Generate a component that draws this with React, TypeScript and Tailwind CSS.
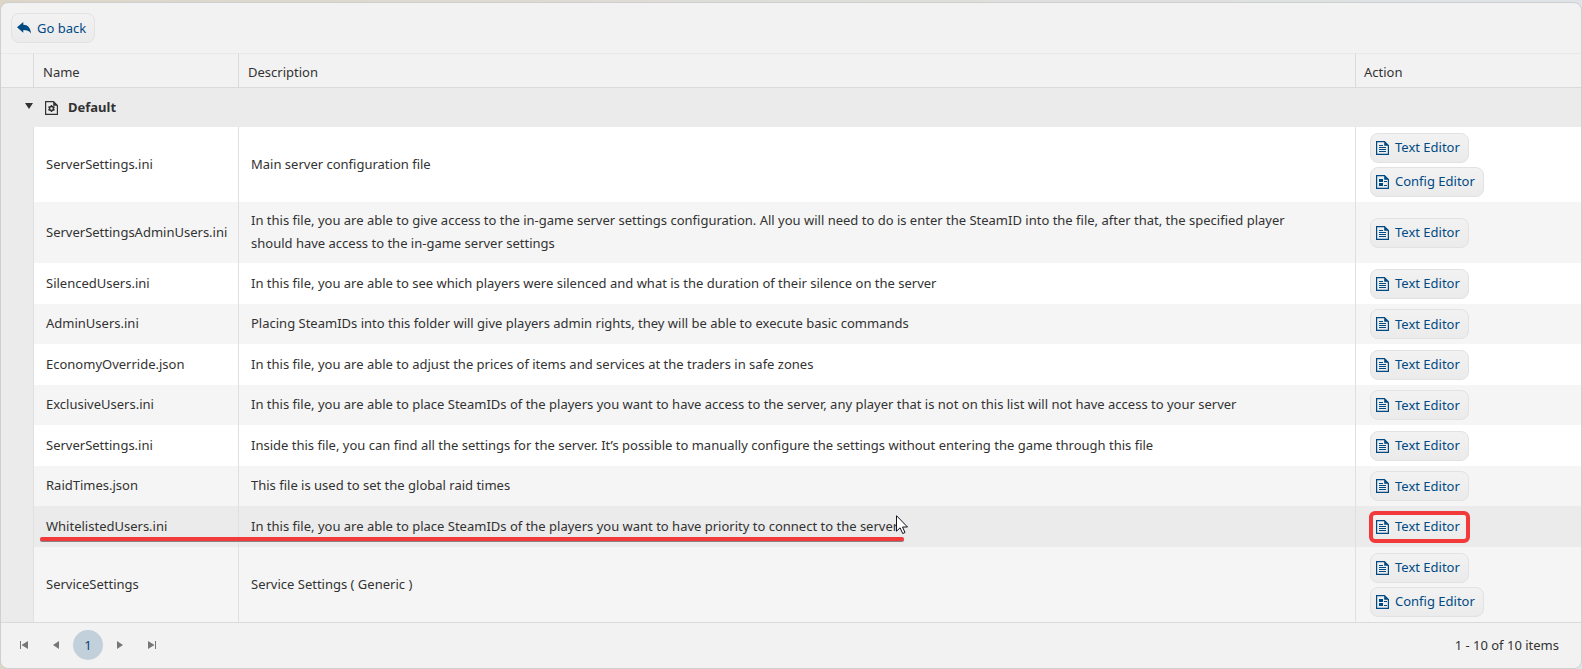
import React from 'react';

type EditorKind = 'text' | 'config';

interface ConfigFile {
  id: number;
  name: string;
  description: string;
  editors: EditorKind[];
  highlighted?: boolean;
}

const files: ConfigFile[] = [
  { id: 1, name: 'ServerSettings.ini', description: 'Main server configuration file', editors: ['text', 'config'] },
  {
    id: 2,
    name: 'ServerSettingsAdminUsers.ini',
    description:
      'In this file, you are able to give access to the in-game server settings configuration. All you will need to do is enter the SteamID into the file, after that, the specified player should have access to the in-game server settings',
    editors: ['text'],
  },
  { id: 3, name: 'SilencedUsers.ini', description: 'In this file, you are able to see which players were silenced and what is the duration of their silence on the server', editors: ['text'] },
  { id: 4, name: 'AdminUsers.ini', description: 'Placing SteamIDs into this folder will give players admin rights, they will be able to execute basic commands', editors: ['text'] },
  { id: 5, name: 'EconomyOverride.json', description: 'In this file, you are able to adjust the prices of items and services at the traders in safe zones', editors: ['text'] },
  { id: 6, name: 'ExclusiveUsers.ini', description: 'In this file, you are able to place SteamIDs of the players you want to have access to the server, any player that is not on this list will not have access to your server', editors: ['text'] },
  { id: 7, name: 'ServerSettings.ini', description: 'Inside this file, you can find all the settings for the server. It’s possible to manually configure the settings without entering the game through this file', editors: ['text'] },
  { id: 8, name: 'RaidTimes.json', description: 'This file is used to set the global raid times', editors: ['text'] },
  { id: 9, name: 'WhitelistedUsers.ini', description: 'In this file, you are able to place SteamIDs of the players you want to have priority to connect to the server', editors: ['text'], highlighted: true },
  { id: 10, name: 'ServiceSettings', description: 'Service Settings ( Generic )', editors: ['text', 'config'] },
];

const editorLabels: Record<EditorKind, string> = {
  text: 'Text Editor',
  config: 'Config Editor',
};

const ReplyIcon = () => (
  <svg className="h-[12px] w-[14px]" viewBox="0 0 14 12" fill="currentColor" aria-hidden="true">
    <path d="M0 5.300 6.300 0v2.800c4.600 0.100 7.200 3 7.700 8.700C12 8.700 10 7.900 6.300 7.900v2.900Z" />
  </svg>
);

const PageOutline = () => (
  <>
    <path d="M0.600 0.600h7.900l3.900 3.900v8.900H0.600z" fill="none" stroke="currentColor" strokeWidth="1.200" />
    <path d="M8.200 0.500 12.500 4.800H8.200z" fill="currentColor" />
  </>
);

const TextFileIcon = () => (
  <svg className="h-[14px] w-[13px]" viewBox="0 0 13 14" aria-hidden="true">
    <PageOutline />
    <path d="M3 4.500h4M3 6.500h7M3 8.500h7M3 10.500h7" stroke="currentColor" strokeWidth="1" />
  </svg>
);

const ConfigFileIcon = () => (
  <svg className="h-[14px] w-[13px]" viewBox="0 0 13 14" aria-hidden="true">
    <PageOutline />
    <path d="M3 4h4v3H3zM3 8h4v3H3z" fill="currentColor" />
    <path d="M8 6.500h3M8 10.500h3" stroke="currentColor" strokeWidth="1" />
  </svg>
);

const GearFileIcon = () => (
  <svg className="h-[14px] w-[13px]" viewBox="0 0 13 14" aria-hidden="true">
    <PageOutline />
    <circle cx="6.500" cy="7.500" r="2" fill="none" stroke="currentColor" strokeWidth="1.500" />
    <path d="M6.500 4v1.500M6.500 9.500v1.500M3.500 5.750l1.300 0.750M8.200 8.500l1.300 0.750M9.500 5.750l-1.300 0.750M4.800 8.500l-1.300 0.750" stroke="currentColor" strokeWidth="1.500" />
  </svg>
);

const PointerIcon = () => (
  <svg className="absolute top-[9px] left-[657px] h-[20px] w-[13px]" viewBox="0 0 13 20" aria-hidden="true">
    <path d="M0.500 0.700v15.500l3.600-3.400 2.600 5.700 2.300-1-2.500-5.500h5z" fill="#fff" stroke="#14141f" strokeWidth="1" />
  </svg>
);

const buttonStyles =
  'flex h-[30px] items-center gap-[6px] rounded-lg border border-[#e2e2e2] bg-linear-to-b from-[#f2f2f2] to-[#ebebeb] pr-[8px] pl-[5px] text-[#004a84] hover:to-[#e2e2e2]';

const EditorButton: React.FC<{ kind: EditorKind }> = ({ kind }) => (
  <button type="button" className={buttonStyles}>
    {kind === 'text' ? <TextFileIcon /> : <ConfigFileIcon />}
    {editorLabels[kind]}
  </button>
);

const pagerButton = 'flex h-[30px] w-[30px] items-center justify-center rounded-full text-[#777] hover:bg-[#e4e4e4]';

const Pager = () => (
  <footer className="flex items-center justify-between border-t border-[#dadada] pt-[7px] pr-[22px] pb-[8px] pl-[8px]">
    <nav className="flex items-center gap-[2px]" aria-label="Pages">
      <button type="button" className={pagerButton} aria-label="First page">
        <svg className="h-2 w-2" viewBox="0 0 8 8" fill="currentColor"><path d="M0 0h1v8H0zM8 0v8L1.500 4z" /></svg>
      </button>
      <button type="button" className={pagerButton} aria-label="Previous page">
        <svg className="h-2 w-2" viewBox="0 0 8 8" fill="currentColor"><path d="M7 0v8L1 4z" /></svg>
      </button>
      <button type="button" className="h-[30px] w-[30px] rounded-full bg-[#c2d0dc] text-[#0d3f75]" aria-current="page">1</button>
      <button type="button" className={pagerButton} aria-label="Next page">
        <svg className="h-2 w-2" viewBox="0 0 8 8" fill="currentColor"><path d="M1 0v8l6-4z" /></svg>
      </button>
      <button type="button" className={pagerButton} aria-label="Last page">
        <svg className="h-2 w-2" viewBox="0 0 8 8" fill="currentColor"><path d="M7 0h1v8H7zM0 0v8l6.500-4z" /></svg>
      </button>
    </nav>
    <span>1 - 10 of 10 items</span>
  </footer>
);

const headerCell = 'border-y border-l border-t-[#e8e8e8] border-b-[#dadada] border-l-[#dadada] pt-[4px] font-normal';
const bodyCell = 'relative border-l border-[#e0e0e0] pt-[7px] pb-[8px] pl-[12px]';

const App: React.FC = () => {
  return (
    <main className="min-h-screen bg-linear-to-r from-[#ddd6c8] to-[#dfe4e8] pt-[2px] font-['Noto_Sans','Segoe_UI',sans-serif] text-[13px] leading-[23px] text-[#323232]">
      <section className="overflow-hidden rounded-lg border border-[#cfcfcf] bg-[#f2f2f2]">
        <div className="p-[10px]">
          <button type="button" className={buttonStyles}>
            <ReplyIcon />
            Go back
          </button>
        </div>
        <table className="w-full table-fixed border-separate border-spacing-0">
          <colgroup>
            <col className="w-[32px]" />
            <col className="w-[205px]" />
            <col />
            <col className="w-[226px]" />
          </colgroup>
          <thead>
            <tr className="h-[35px] text-left">
              <td className="border-y border-t-[#e8e8e8] border-b-[#dadada]" />
              <th scope="col" className={`${headerCell} pl-[9px]`}>Name</th>
              <th scope="col" className={`${headerCell} pl-[9px]`}>Description</th>
              <th scope="col" className={`${headerCell} pl-[8px]`}>Action</th>
            </tr>
          </thead>
          <tbody>
            <tr className="h-[39px] bg-[#ebebeb]">
              <td colSpan={4}>
                <div className="flex items-center pl-[24px]">
                  <button type="button" className="pb-[4px]" aria-label="Collapse group" aria-expanded="true">
                    <svg className="h-[6px] w-2" viewBox="0 0 8 6" fill="currentColor"><path d="M0 0h8L4 6z" /></svg>
                  </button>
                  <span className="flex items-center gap-[10px] pl-[12px] font-bold">
                    <GearFileIcon />
                    Default
                  </span>
                </div>
              </td>
            </tr>
            {files.map((file) => (
              <tr
                key={file.id}
                className={`${file.editors.length > 1 ? 'h-[75px]' : 'h-[40px] even:h-[41px]'} ${file.highlighted ? 'bg-[#ebebeb]' : 'bg-white odd:bg-[#f5f5f5]'}`}
              >
                <td className="bg-[#ebebeb]" />
                <td className={bodyCell}>
                  {file.name}
                  {file.highlighted && (
                    <span className="absolute bottom-[6px] left-[6px] z-10 h-[4px] w-[864px] rounded-full bg-[#f23a3a] shadow-[0_1px_0_#8a8080]" />
                  )}
                </td>
                <td className={`${bodyCell} pr-[32px]`}>
                  {file.description}
                  {file.highlighted && <PointerIcon />}
                </td>
                <td className="border-l border-[#e0e0e0] pl-[14px]">
                  <div className="flex flex-col items-start gap-[4px] py-[5px]">
                    {file.editors.map((kind) => (
                      <div key={kind} className="relative">
                        <EditorButton kind={kind} />
                        {file.highlighted && (
                          <span className="pointer-events-none absolute -inset-px rounded-md border-4 border-[#f23a3a]" />
                        )}
                      </div>
                    ))}
                  </div>
                </td>
              </tr>
            ))}
          </tbody>
        </table>
        <Pager />
      </section>
    </main>
  );
};

export default App;
